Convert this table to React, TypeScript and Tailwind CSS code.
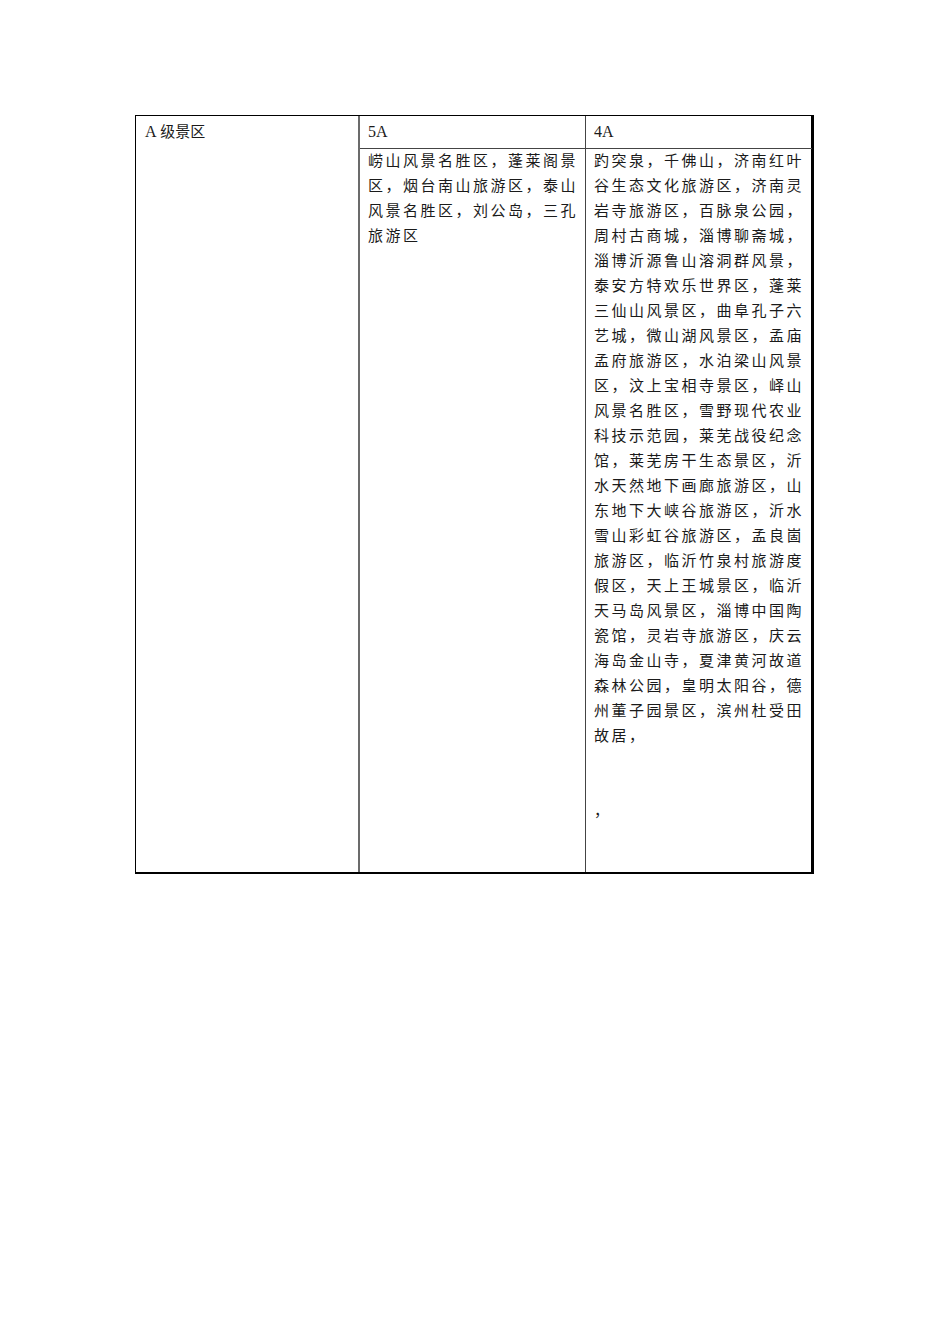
const cjk = { fontFamily: '"Liberation Serif", "Noto Sans CJK SC", serif' }

const col2 = [
  '崂山风景名胜区，蓬莱阁景',
  '区，烟台南山旅游区，泰山',
  '风景名胜区，刘公岛，三孔',
  '旅游区',
]

const col3 = [
  '趵突泉，千佛山，济南红叶',
  '谷生态文化旅游区，济南灵',
  '岩寺旅游区，百脉泉公园，',
  '周村古商城，淄博聊斋城，',
  '淄博沂源鲁山溶洞群风景，',
  '泰安方特欢乐世界区，蓬莱',
  '三仙山风景区，曲阜孔子六',
  '艺城，微山湖风景区，孟庙',
  '孟府旅游区，水泊梁山风景',
  '区，汶上宝相寺景区，峄山',
  '风景名胜区，雪野现代农业',
  '科技示范园，莱芜战役纪念',
  '馆，莱芜房干生态景区，沂',
  '水天然地下画廊旅游区，山',
  '东地下大峡谷旅游区，沂水',
  '雪山彩虹谷旅游区，孟良崮',
  '旅游区，临沂竹泉村旅游度',
  '假区，天上王城景区，临沂',
  '天马岛风景区，淄博中国陶',
  '瓷馆，灵岩寺旅游区，庆云',
  '海岛金山寺，夏津黄河故道',
  '森林公园，皇明太阳谷，德',
  '州董子园景区，滨州杜受田',
  '故居，',
  '\u00a0',
  '\u00a0',
  '，',
]

function Lines({ items }: { items: string[] }) {
  return (
    <div className="flex flex-col">
      {items.map((t, i) => (
        <div key={i} className="h-[25px] leading-[25px] whitespace-nowrap tracking-[2.5px]">
          {t}
        </div>
      ))}
    </div>
  )
}

export default function App() {
  return (
    <div className="min-h-[1344px] w-[950px] bg-white text-[15px] text-[#1a1a1a]" style={cjk}>
      <div className="pt-[115px] pl-[135px]">
        <div className="grid w-[679px] grid-cols-[224px_226px_226px] grid-rows-[33px_723px] border-t border-l border-black border-r-[3px] border-b-2">
          <div className="row-span-2 border-r-2 border-[#6b6b6b] pl-[9px] pt-[3px] leading-[25px]">
            <span className="text-[16px]">A</span> 级景区
          </div>
          <div className="border-r border-b border-[#444] pl-[8px] pt-[3px] leading-[25px] text-[16px]">5A</div>
          <div className="border-b border-[#444] pl-[8px] pt-[3px] leading-[25px] text-[16px]">4A</div>
          <div className="border-r border-[#444] pl-[8px]">
            <Lines items={col2} />
          </div>
          <div className="pl-[8px]">
            <Lines items={col3} />
          </div>
        </div>
      </div>
    </div>
  )
}
